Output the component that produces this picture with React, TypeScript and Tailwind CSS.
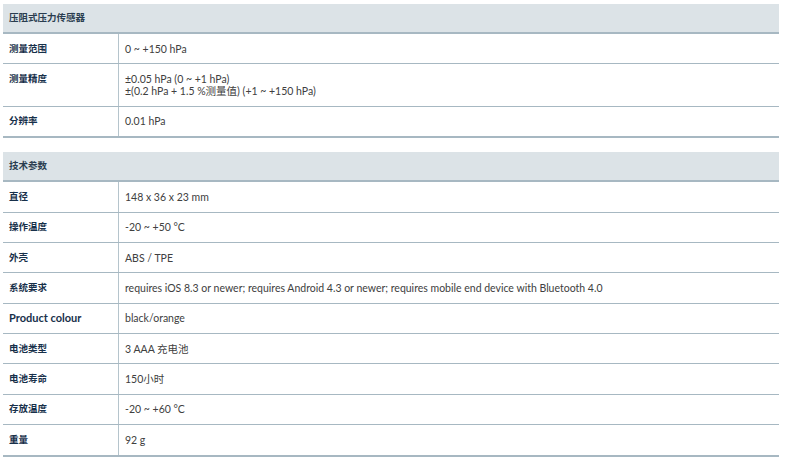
import React from 'react';

type Row = { label: string; value: React.ReactNode };

const sensorRows: Row[] = [
  { label: '测量范围', value: '0 ~ +150 hPa' },
  {
    label: '测量精度',
    value: (
      <>
        <div>±0.05 hPa (0 ~ +1 hPa)</div>
        <div>±(0.2 hPa + 1.5 %测量值) (+1 ~ +150 hPa)</div>
      </>
    ),
  },
  { label: '分辨率', value: '0.01 hPa' },
];

const techRows: Row[] = [
  { label: '直径', value: '148 x 36 x 23 mm' },
  { label: '操作温度', value: '-20 ~ +50 °C' },
  { label: '外壳', value: 'ABS / TPE' },
  {
    label: '系统要求',
    value:
      'requires iOS 8.3 or newer; requires Android 4.3 or newer; requires mobile end device with Bluetooth 4.0',
  },
  { label: 'Product colour', value: 'black/orange' },
  { label: '电池类型', value: '3 AAA 充电池' },
  { label: '电池寿命', value: '150小时' },
  { label: '存放温度', value: '-20 ~ +60 °C' },
  { label: '重量', value: '92 g' },
];

// chinese labels render smaller than latin ones in the original
const isCjk = (s: string) => /[\u4e00-\u9fff]/.test(s);

function Section({ title, rows, className = '' }: { title: string; rows: Row[]; className?: string }) {
  return (
    <div className={className}>
      <div className="bg-[#dce3e7] border-b-2 border-[#a7b8c2] px-[6px] py-[8px] leading-[12px] text-[9.5px] font-bold text-[#2a3d4f]">
        {title}
      </div>
      {rows.map((row, i) => (
        <div
          key={row.label}
          className={`flex ${i === rows.length - 1 ? 'border-b-2' : 'border-b'} border-[#a7b8c2]`}
        >
          <div
            className={`w-[116px] shrink-0 border-r border-[#b5c4cc] px-[6px] py-[8.7px] leading-[12px] font-bold text-[#17304a] ${
              isCjk(row.label) ? 'text-[9.5px]' : 'text-[11px]'
            }`}
          >
            {row.label}
          </div>
          <div className="flex-1 px-[6px] py-[8.7px] leading-[12px] text-[10.5px] text-[#404040]">
            {row.value}
          </div>
        </div>
      ))}
    </div>
  );
}

export default function App() {
  return (
    <div
      className="w-[790px] h-[460px] bg-white pt-[4px] pl-[3px] overflow-hidden"
      style={{ fontFamily: 'Lato, "Noto Sans CJK SC", sans-serif' }}
    >
      <div className="w-[776px]">
        <Section title="压阻式压力传感器" rows={sensorRows} />
        <Section title="技术参数" rows={techRows} className="mt-[14px]" />
      </div>
    </div>
  );
}
